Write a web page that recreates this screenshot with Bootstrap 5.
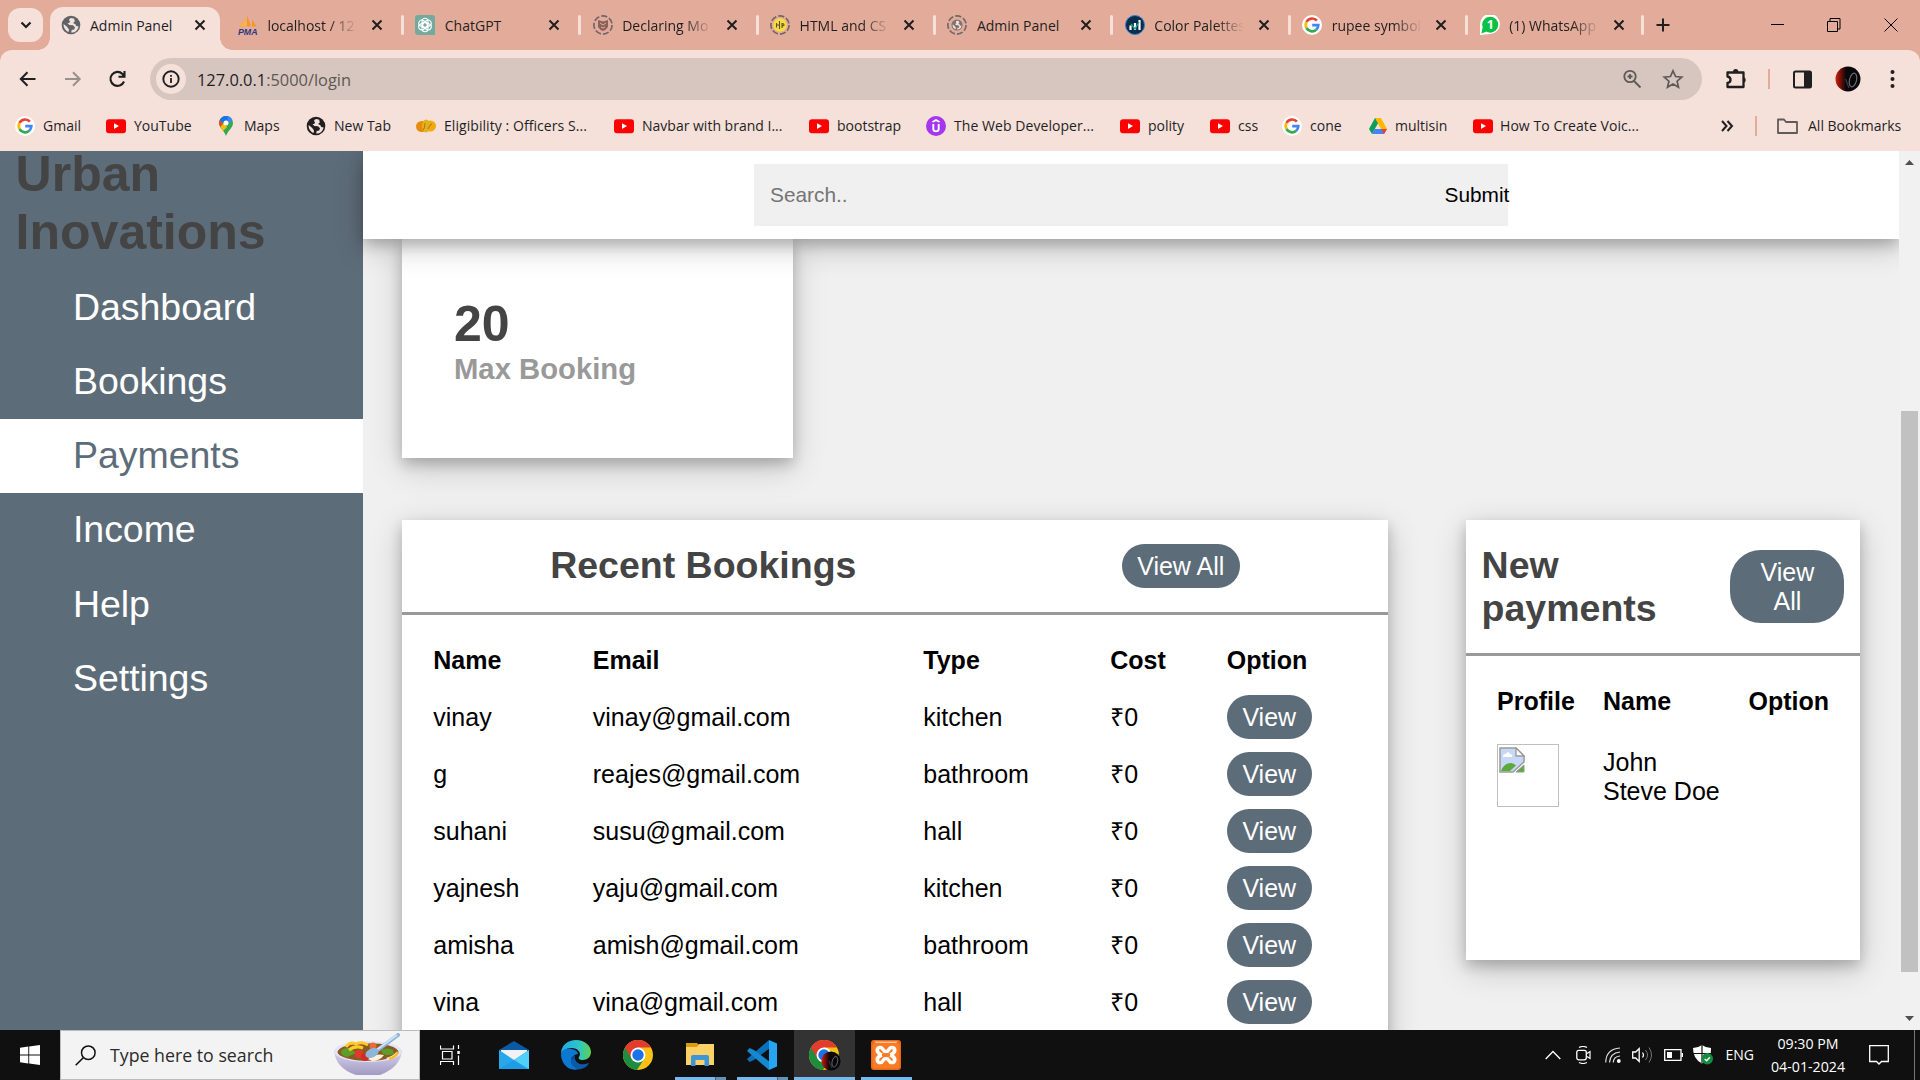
<!DOCTYPE html>
<html lang="en">
<head>
<meta charset="utf-8">
<title>Admin Panel</title>
<link href="https://cdn.jsdelivr.net/npm/bootstrap@5.3.0/dist/css/bootstrap.min.css" rel="stylesheet">
<style>
  :root { --strip:#e3ab9a; --bar:#f5e0da; --slate:#5d6c79; --page:#f0f0f0; }
  body { width:1920px; height:1080px; overflow:hidden; font-family:"Open Sans","Noto Sans",sans-serif; font-size:14px; line-height:20px; color:#1f1f1f; }
  svg { display:block; flex:none; }

  /* tab strip */
  .tabstrip { height:50px; background:var(--strip); padding-left:8px; }
  .tab-search { width:35px; height:34px; margin-top:8px; border-radius:12px; background:var(--bar); flex:none; }
  .tab-list { margin-left:7px; width:1594px; flex:none; }
  .tab-item { width:177.4px; height:50px; padding:0 0 0 10.5px; flex:none; position:relative; }
  .tab-item .tab-title { width:97px; margin-left:9.5px; padding-top:1px; white-space:nowrap; overflow:hidden; -webkit-mask-image:linear-gradient(90deg,#000 62px,transparent 90px); }
  .tab-item .tab-title.whole { -webkit-mask-image:none; }
  .tab-item .tab-x { margin-left:6.5px; }
  .tab-item.parted::after { content:""; position:absolute; right:1px; top:15px; width:3px; height:20px; border-radius:2px; background:var(--bar); }
  .tab-item.current::before { content:""; position:absolute; left:0; top:7px; width:170px; height:43px; border-radius:13px 13px 0 0; background:var(--bar); }
  .tab-item.current > * { position:relative; }
  .flare { position:absolute !important; top:38px; width:12px; height:12px; }
  .flare-l { left:-12px; background:radial-gradient(circle at 0 0,transparent 11.5px,var(--bar) 12px); }
  .flare-r { left:170px; background:radial-gradient(circle at 100% 0,transparent 11.5px,var(--bar) 12px); }

  /* toolbar */
  .toolshell { background:var(--strip); }
  .toolrow { height:58px; background:var(--bar); border-radius:12px 12px 0 0; padding:8px 0 8px 18px; }
  .omnibox { width:1552px; height:42px; margin-left:22px; border-radius:21px; background:#d7c6bf; padding:0 18px 0 6px; font-size:16.4px; flex:none; }
  .site-info { width:30px; height:30px; border-radius:50%; background:var(--bar); }
  .bookrow { height:43px; background:var(--bar); padding-left:15px; padding-bottom:7px; }
  .bookmark { gap:8px; white-space:nowrap; flex:none; }
  .vbar { width:2px; height:20px; background:var(--strip); }

  /* page */
  .viewport { height:879px; background:var(--page); overflow:hidden; font-family:"Liberation Sans",Arial,sans-serif; color:#000; font-size:25px; line-height:28.5px; }
  .sidepanel { width:363px; background:var(--slate); flex:none; }
  .brandname { font-size:50px; line-height:57.6px; font-weight:700; color:#444; margin:-5px 0 9px; padding-left:15.6px; }
  .sidelink { height:74.2px; padding:15.600px 0 0 73px; font-size:37.5px; line-height:43px; color:#fff; text-decoration:none; display:block; letter-spacing:-.05px; }
  .sidelink.here { background:#fff; color:var(--slate); }
  .mainpane { width:1536px; flex:none; min-height:0; }
  .raised { background:#fff; box-shadow:0 6.25px 12.5px 0 rgba(0,0,0,.2),0 9.4px 31.25px 0 rgba(0,0,0,.19); }
  .topbar { height:88px; position:relative; z-index:2; flex:none; clip-path:inset(0 0 -60px -60px); }
  .finder { width:754px; height:62px; margin:13px 0 0 391px; background:#f0f0f0; padding-left:16px; font-size:20.83px; }
  .finder-input { width:674.5px; color:#757575; flex:none; }
  .content-area { padding:0 39px; }
  .stat { width:391px; height:219px; padding:57px 0 0 52px; }
  .stat-num { font-size:50px; line-height:57.6px; font-weight:700; color:#444; }
  .stat-label { font-size:29.25px; line-height:33px; font-weight:700; color:#999; margin-top:-1px; }
  .boxes { margin-top:62px; gap:78px; }
  .recent { width:986px; height:600px; flex:none; }
  .newpay { width:394px; height:440px; flex:none; }
  .box-head { padding:0 15.6px; border-bottom:3px solid #999; color:#444; }
  .box-head h2 { font-size:37.5px; line-height:43px; font-weight:700; margin:0; }
  .recent .box-head { height:95px; }
  .recent .box-head h2 { margin-top:-2px; }
  .newpay .box-head { height:136px; }
  .pill { display:inline-block; background:var(--slate); color:#fff; padding:7.8px 15.6px; border-radius:31px; text-align:center; text-decoration:none; line-height:28.4px; vertical-align:middle; }
  .newpay .pill { width:114px; }
  .grid-table { table-layout:fixed; border-collapse:collapse; }
  .grid-table th, .grid-table td { padding:0; height:57px; vertical-align:middle; text-align:left; white-space:nowrap; }
  .recent .grid-table { width:920px; margin:16.5px 0 0 31.3px; }
  .newpay .grid-table { width:360px; margin:17px 0 0 31px; }
  .newpay .grid-table td { height:90px; }
  .newpay .person { padding-top:4px; line-height:29px; }
  .missing { width:62px; height:63px; border:1px solid #c0c0c0; padding:2px 1px; }
  .scroller { width:21px; background:#f1f1f1; padding:9px 0 9px; flex:none; }
  .thumb { width:17px; height:561px; margin-top:246px; background:#c1c1c1; }

  /* taskbar */
  .taskbar { height:50px; background:#101010; color:#fff; }
  .start { width:60px; }
  .tasksearch { width:360px; height:50px; background:#f3f3f3; border:1px solid #bbb; color:#2b2b2b; font-size:17.75px; padding-left:14px; flex:none; }
  .tasksearch-label { width:237px; padding-left:14px; flex:none; }
  .app { width:62px; height:50px; position:relative; flex:none; }
  .app.open::after { content:""; position:absolute; left:6px; right:5px; bottom:0; height:3px; background:#76b9ed; }
  .app.multi::after { background:linear-gradient(90deg,#76b9ed 40px,#4b5f70 40px,#4b5f70 41px,#6593b8 41px); }
  .app.active { background:linear-gradient(90deg,transparent 1px,#333 1px); }
  .app.active::after { left:1px; right:0; }
  .tray { margin-left:auto; padding-right:5px; }
  .clock { width:90px; margin-left:9px; line-height:23px; font-size:14.2px; text-align:center; }
  .peek { width:1px; height:50px; background:#777; margin-left:25px; }
</style>
<script src="https://cdn.jsdelivr.net/npm/bootstrap@5.3.0/dist/js/bootstrap.bundle.min.js"></script>
</head>
<body class="d-flex flex-column">

<svg width="0" height="0" class="position-absolute" aria-hidden="true">
  <symbol id="i-x" viewBox="0 0 12 12"><path d="M1.500 1.500l9 9M10.500 1.500l-9 9" stroke="#1f1f1f" stroke-width="2" fill="none"/></symbol>
  <symbol id="i-globe" viewBox="0 0 20 20"><circle cx="10" cy="10" r="9.300" fill="currentColor"/><path d="M10.500 3C8 3.500 7.500 5 8.800 6.200c1 1-.8 1.800-2.300 2L8.500 10l3.500.3 2 2-.8 2.200-2.500.5-.5 2.500c3.500.2 6.800-2 7.300-6.300-1.500.5-2.800-.4-3-2L12 8l1.800-1.500-.6-2.800zM2.600 9c-.3 3.500 1.800 6.800 5 8l.4-2.500-2-2.700z" fill="#f5e0da"/></symbol>
  <symbol id="i-g" viewBox="0 0 20 20"><circle cx="10" cy="10" r="10" fill="#fff"/><g fill="none" stroke-width="2.700"><path d="M14.900 5.700A6.300 6.300 0 0 0 4.500 7" stroke="#ea4335"/><path d="M4.500 7a6.300 6.300 0 0 0 0 6" stroke="#fbbc05"/><path d="M4.500 13a6.300 6.300 0 0 0 9.700 1.700" stroke="#34a853"/><path d="M14.200 14.700A6.300 6.300 0 0 0 16.300 10.200H10.200" stroke="#4285f4"/></g></symbol>
  <symbol id="i-yt" viewBox="0 0 20 20"><rect y="3.200" width="20" height="14" rx="3" fill="#f00"/><path d="M8 7.300v5.600l5-2.800z" fill="#fff"/></symbol>
  <symbol id="i-chrome" viewBox="0 0 30 30"><circle cx="15" cy="15" r="15" fill="#fbc116"/><path d="M15 15L2 7.500A15 15 0 0 0 14 30l7.500-11.500z" fill="#1e8e3e"/><path d="M2 7.500A15 15 0 0 1 28 7.500H15L8.500 18.700z" fill="#e33b2e"/><circle cx="15" cy="15" r="7.500" fill="#fff"/><circle cx="15" cy="15" r="5.700" fill="#1a73e8"/></symbol>
  <symbol id="i-avatar" viewBox="0 0 26 26"><defs><linearGradient id="glow"><stop stop-color="#d5200c"/><stop offset=".22" stop-color="#6a0f08"/><stop offset=".42" stop-color="#0a0709"/></linearGradient></defs><circle cx="13" cy="13" r="12.500" fill="url(#glow)"/><ellipse cx="18" cy="14" rx="3.500" ry="7" transform="rotate(14 18 14)" fill="none" stroke="#6d717e" stroke-width="1.100"/><path d="M10.500 13l3.500 9" stroke="#454854"/></symbol>
  <symbol id="i-dash" viewBox="0 0 20 20"><circle cx="10" cy="10" r="9.100" fill="none" stroke="#6f686a" stroke-width="1.700" stroke-dasharray="6.100 2.070"/></symbol>
</svg>

<!-- Tabs -->
<div class="tabstrip d-flex">
  <div class="tab-search d-flex align-items-center justify-content-center"><svg width="12" height="8" viewBox="0 0 12 8"><path d="M1.500 1.500L6 6l4.500-4.500" fill="none" stroke="#1f1f1f" stroke-width="2.200"/></svg></div>
  <div class="tab-list d-flex">
    <div class="tab-item current d-flex align-items-center"><i class="flare flare-l"></i><i class="flare flare-r"></i>
      <svg width="20" height="20" style="color:#5f6368"><use href="#i-globe"/></svg><span class="tab-title whole">Admin Panel</span><svg class="tab-x" width="12" height="12"><use href="#i-x"/></svg></div>
    <div class="tab-item parted d-flex align-items-center">
      <svg width="20" height="20" viewBox="0 0 20 20"><path d="M1.500 11.500L8 3v8.500zM9 11.500V0l4 11.500zM14 11.500V4.500l4.500 7z" fill="#f7981d"/><path d="M1.500 11.500L8 3v8.500z" fill="#fbb04c"/><text x="0" y="19.500" font-family="Liberation Sans" font-weight="700" font-style="italic" font-size="8.800" fill="#29397e">PMA</text></svg><span class="tab-title">localhost / 127</span><svg class="tab-x" width="12" height="12"><use href="#i-x"/></svg></div>
    <div class="tab-item parted d-flex align-items-center">
      <svg width="20" height="20" viewBox="0 0 20 20"><path d="M3 0h14q3 0 3 3v17H3q-3 0-3-3V3q0-3 3-3z" fill="#74aa9c"/><g fill="none" stroke="#fff" stroke-width="1.100"><rect id="k" x="7" y="3.300" width="6" height="9" rx="3"/><use href="#k" transform="rotate(60 10 10)"/><use href="#k" transform="rotate(120 10 10)"/><use href="#k" transform="rotate(180 10 10)"/><use href="#k" transform="rotate(240 10 10)"/><use href="#k" transform="rotate(300 10 10)"/></g></svg><span class="tab-title whole">ChatGPT</span><svg class="tab-x" width="12" height="12"><use href="#i-x"/></svg></div>
    <div class="tab-item parted d-flex align-items-center">
      <svg width="20" height="20" viewBox="0 0 20 20"><use href="#i-dash"/><path d="M5 5l5 1.500L15 5v7q-2 3-5 4-3-1-5-4z" fill="#8b625a"/><path d="M7 8l3 2 3-2M8 12l2 1 2-1" stroke="#dfaa99" fill="none"/></svg><span class="tab-title">Declaring Mo</span><svg class="tab-x" width="12" height="12"><use href="#i-x"/></svg></div>
    <div class="tab-item parted d-flex align-items-center">
      <svg width="20" height="20" viewBox="0 0 20 20"><use href="#i-dash"/><circle cx="10" cy="10" r="6.700" fill="#f8dc3d"/><path d="M6.500 8v4.500M6.500 10h3M9.500 6v8M12 8v5M12 8.500q2.500 0 1.800 2l-1.800.5" fill="none" stroke="#575034" stroke-width="1.100"/></svg><span class="tab-title">HTML and CS</span><svg class="tab-x" width="12" height="12"><use href="#i-x"/></svg></div>
    <div class="tab-item parted d-flex align-items-center">
      <svg width="20" height="20" viewBox="0 0 20 20" style="color:#7f7472"><use href="#i-dash"/><use href="#i-globe" x="4" y="4" width="12" height="12"/></svg><span class="tab-title whole">Admin Panel</span><svg class="tab-x" width="12" height="12"><use href="#i-x"/></svg></div>
    <div class="tab-item parted d-flex align-items-center">
      <svg width="20" height="20" viewBox="0 0 20 20"><circle cx="10" cy="10" r="9.500" fill="#0b2c4a" stroke="#2b84cb"/><path d="M5.500 10.500V15M10 8v7M14.500 5v10" stroke="#fff" stroke-width="2.200"/><path d="M6 9l4 5 4-7" fill="none" stroke="#17a88f" stroke-width="1.300"/></svg><span class="tab-title">Color Palettes</span><svg class="tab-x" width="12" height="12"><use href="#i-x"/></svg></div>
    <div class="tab-item parted d-flex align-items-center">
      <svg width="20" height="20"><use href="#i-g"/></svg><span class="tab-title">rupee symbol</span><svg class="tab-x" width="12" height="12"><use href="#i-x"/></svg></div>
    <div class="tab-item parted d-flex align-items-center" style="width:176px">
      <svg width="20" height="20" viewBox="0 0 20 20"><path d="M0 20V9A10 10 0 1 1 10 19z" fill="#fff"/><circle cx="10.200" cy="9.700" r="8" fill="#09c144"/><path d="M1.500 18.500l1-6 4 4z" fill="#09c144"/><text x="6.700" y="14.300" font-size="12.500" font-weight="700" fill="#fff">1</text></svg><span class="tab-title">(1) WhatsApp</span><svg class="tab-x" width="12" height="12"><use href="#i-x"/></svg></div>
  </div>
  <div class="d-flex align-items-center" style="margin-left:12px">
    <svg width="14" height="14" viewBox="0 0 14 14"><path d="M7 .5v13M.5 7h13" stroke="#1f1f1f" stroke-width="2"/></svg>
    <svg style="margin-left:101px" width="13" height="14" viewBox="0 0 13 14"><path d="M0 6.500h13" stroke="#000"/></svg>
    <svg style="margin-left:43px" width="14" height="14" viewBox="0 0 14 14"><path d="M.5 3.500h10v10H.5zM3 3.500v-3h10v10.500h-2.500" fill="none" stroke="#000"/></svg>
    <svg style="margin-left:43px" width="14" height="14" viewBox="0 0 14 14"><path d="M.5.5l13 13M13.500.5l-13 13" fill="none" stroke="#000"/></svg>
  </div>
</div>

<!-- Toolbar -->
<div class="toolshell">
  <div class="toolrow d-flex align-items-center">
    <svg width="20" height="20" viewBox="0 0 20 20"><path d="M17.500 10H3M9.500 3.300L2.800 10l6.700 6.700" fill="none" stroke="#1f1f1f" stroke-width="2"/></svg>
    <svg style="margin-left:25px" width="20" height="20" viewBox="0 0 20 20"><path d="M2 10h14.500M10 3.300l6.700 6.700-6.700 6.700" fill="none" stroke="#998f8d" stroke-width="2"/></svg>
    <svg style="margin-left:25px" width="20" height="20" viewBox="0 0 20 20"><path d="M16 12.500A7 7 0 1 1 14.500 5l1.500 2M16.500 2v5.700h-6" fill="none" stroke="#1f1f1f" stroke-width="2.100"/></svg>
    <div class="omnibox d-flex align-items-center">
      <div class="site-info d-flex align-items-center justify-content-center"><svg width="18" height="18" viewBox="0 0 18 18"><circle cx="9" cy="9" r="7.700" fill="none" stroke="#1f1f1f" stroke-width="1.900"/><path d="M9 8v5M9 5v1.800" stroke="#1f1f1f" stroke-width="1.800"/></svg></div>
      <span style="margin-left:11px;padding-top:1px">127.0.0.1<span style="color:#5f5753">:5000/login</span></span>
      <svg class="ms-auto" width="20" height="20" viewBox="0 0 20 20"><g fill="none" stroke="#5c5957" stroke-width="1.800"><circle cx="8" cy="7.500" r="5.700"/><path d="M12 12l6.500 6.500M8 5v5M5.500 7.500h5"/></g></svg>
      <svg style="margin-left:20px" width="22" height="20" viewBox="0 0 22 20"><path d="M11 1.800l2.600 5.700 6.200.6-4.700 4.100 1.400 6-5.500-3.200-5.500 3.200 1.400-6L2.200 8.100l6.200-.6z" fill="none" stroke="#5c5957" stroke-width="1.700"/></svg>
    </div>
    <svg style="margin-left:23px" width="23" height="24" viewBox="0 0 23 24"><path d="M2.500 5.500h16V20H2.500v-4q3-.5 3-3.200T2.500 9.500z" fill="none" stroke="#1f1f1f" stroke-width="2.300" stroke-linejoin="round"/><path d="M8 5a2.700 3 0 0 1 5.400 0zM18.500 10a3 3 0 0 1 0 5.800z" fill="#1f1f1f"/></svg>
    <div class="vbar" style="margin-left:20px"></div>
    <svg style="margin-left:23px" width="19" height="19" viewBox="0 0 19 19"><rect x="1" y="1.500" width="17" height="16" rx="1.500" fill="none" stroke="#1f1f1f" stroke-width="2"/><path d="M11 1.500h7v16h-7z" fill="#1f1f1f"/></svg>
    <svg style="margin-left:23px" width="26" height="26"><use href="#i-avatar"/></svg>
    <svg style="margin-left:29px" width="5" height="20" viewBox="0 0 5 20"><g fill="#1f1f1f"><circle cx="2.500" cy="3" r="2"/><circle cx="2.500" cy="10" r="2"/><circle cx="2.500" cy="17" r="2"/></g></svg>
  </div>
</div>
<div class="bookrow d-flex align-items-center">
  <div class="bookmark d-flex" style="width:91px"><svg width="20" height="20"><use href="#i-g"/></svg>Gmail</div>
  <div class="bookmark d-flex" style="width:110px"><svg width="20" height="20"><use href="#i-yt"/></svg>YouTube</div>
  <div class="bookmark d-flex" style="width:90px"><svg width="20" height="20" viewBox="0 0 20 20"><path d="M10 0a7 7 0 0 0-7 7c0 5 5 7 7 13 2-6 7-8 7-13a7 7 0 0 0-7-7z" fill="#34a853"/><path d="M3.700 4L10 9l5-6.900A7 7 0 0 0 3.700 4z" fill="#1a73e8"/><path d="M3.700 4L7 7.500 4.500 11Q2 7 3.700 4z" fill="#ea4335"/><path d="M4.500 11L7.600 7l3.500 4L7 15z" fill="#fbbc04"/><path d="M12 .3q3.500 1 4.500 4L11 8z" fill="#4285f4"/><circle cx="10" cy="7" r="2.500" fill="#fff"/></svg>Maps</div>
  <div class="bookmark d-flex" style="width:110px;color:#1f1f1f"><svg width="20" height="20"><use href="#i-globe"/></svg>New Tab</div>
  <div class="bookmark d-flex" style="width:198px;letter-spacing:.06px"><svg width="20" height="20" viewBox="0 0 20 20"><ellipse cx="6" cy="10.500" rx="6" ry="5.500" fill="#e88a0a"/><ellipse cx="14" cy="10" rx="6" ry="5.500" fill="#f2a90c"/><ellipse cx="10" cy="10" rx="4" ry="6.500" fill="#e0b31e"/><path d="M7 14q2-1 2-7M12 13q2-5 4-5" stroke="#b8700a" fill="none"/></svg>Eligibility : Officers S...</div>
  <div class="bookmark d-flex" style="width:195px"><svg width="20" height="20"><use href="#i-yt"/></svg>Navbar with brand I...</div>
  <div class="bookmark d-flex" style="width:117px"><svg width="20" height="20"><use href="#i-yt"/></svg>bootstrap</div>
  <div class="bookmark d-flex" style="width:194px;letter-spacing:.06px"><svg width="20" height="20" viewBox="0 0 20 20"><circle cx="10" cy="10" r="10" fill="#a435f0"/><path d="M6.500 6L10 4l3.500 2M7.300 8v5q0 2.300 2.700 2.300t2.700-2.300V8" fill="none" stroke="#fff" stroke-width="1.900"/></svg>The Web Developer...</div>
  <div class="bookmark d-flex" style="width:90px"><svg width="20" height="20"><use href="#i-yt"/></svg>polity</div>
  <div class="bookmark d-flex" style="width:72px"><svg width="20" height="20"><use href="#i-yt"/></svg>css</div>
  <div class="bookmark d-flex" style="width:86px"><svg width="20" height="20"><use href="#i-g"/></svg>cone</div>
  <div class="bookmark d-flex" style="width:105px;gap:7px"><svg width="20" height="20" viewBox="0 0 20 20"><path d="M7 2h6L4 18l-3-5z" fill="#0f9d58"/><path d="M7 2h6l6 11h-6z" fill="#ffba00"/><path d="M6.500 13H19l-3 5H4z" fill="#4285f4"/><path d="M13 13h6l-3 5z" fill="#ea4335"/></svg>multisin</div>
  <div class="bookmark d-flex" style="gap:7px;letter-spacing:.06px"><svg width="20" height="20"><use href="#i-yt"/></svg>How To Create Voic...</div>
  <svg class="ms-auto" width="14" height="14" viewBox="0 0 14 14"><path d="M2 2l4.500 5L2 12M7.500 2L12 7l-4.500 5" fill="none" stroke="#1f1f1f" stroke-width="2"/></svg>
  <div class="vbar" style="margin-left:21px"></div>
  <div class="bookmark d-flex" style="margin-left:20px;width:143px;gap:10px"><svg width="21" height="20" viewBox="0 0 21 20"><path d="M1 3.500h6l2 2.500h11v11H1z" fill="none" stroke="#5f5b5a" stroke-width="1.800" stroke-linejoin="round"/></svg>All Bookmarks</div>
</div>

<!-- Web page -->
<div class="viewport d-flex">
  <nav class="sidepanel">
    <h1 class="brandname">Urban<br>Inovations</h1>
    <a class="sidelink">Dashboard</a>
    <a class="sidelink">Bookings</a>
    <a class="sidelink here">Payments</a>
    <a class="sidelink">Income</a>
    <a class="sidelink">Help</a>
    <a class="sidelink">Settings</a>
  </nav>
  <main class="mainpane d-flex flex-column">
    <div class="topbar raised d-flex align-items-start">
      <div class="finder d-flex align-items-center"><span class="finder-input">Search..</span><span>Submit</span></div>
    </div>
    <div class="content-area">
      <div class="stat raised">
        <div class="stat-num">20</div>
        <div class="stat-label">Max Booking</div>
      </div>
      <div class="boxes d-flex align-items-start">
        <section class="recent raised">
          <div class="box-head d-flex align-items-center justify-content-around"><h2>Recent Bookings</h2><a class="pill">View All</a></div>
          <table class="grid-table">
            <colgroup><col style="width:159.500px"><col style="width:330.500px"><col style="width:187px"><col style="width:116.500px"><col></colgroup>
            <tr><th>Name</th><th>Email</th><th>Type</th><th>Cost</th><th>Option</th></tr>
            <tr><td>vinay</td><td>vinay@gmail.com</td><td>kitchen</td><td>₹0</td><td><a class="pill">View</a></td></tr>
            <tr><td>g</td><td>reajes@gmail.com</td><td>bathroom</td><td>₹0</td><td><a class="pill">View</a></td></tr>
            <tr><td>suhani</td><td>susu@gmail.com</td><td>hall</td><td>₹0</td><td><a class="pill">View</a></td></tr>
            <tr><td>yajnesh</td><td>yaju@gmail.com</td><td>kitchen</td><td>₹0</td><td><a class="pill">View</a></td></tr>
            <tr><td>amisha</td><td>amish@gmail.com</td><td>bathroom</td><td>₹0</td><td><a class="pill">View</a></td></tr>
            <tr><td>vina</td><td>vina@gmail.com</td><td>hall</td><td>₹0</td><td><a class="pill">View</a></td></tr>
          </table>
        </section>
        <section class="newpay raised">
          <div class="box-head d-flex align-items-center justify-content-between"><h2>New<br>payments</h2><a class="pill">View All</a></div>
          <table class="grid-table">
            <colgroup><col style="width:106px"><col style="width:145.500px"><col></colgroup>
            <tr><th>Profile</th><th>Name</th><th>Option</th></tr>
            <tr><td><div class="missing"><svg width="26" height="26" viewBox="0 0 26 26"><path d="M1 1h16l8 8v6L14 25H1z" fill="#c6d8f5" stroke="#9a9a9a" stroke-width="1.500"/><path d="M2 24q3-8 10-8 3 0 5 2.500L11 24z" fill="#5bab38"/><path d="M4 9q1-3 3-2 2-4 4 0 3 0 2 3H4z" fill="#fff"/><path d="M17 1v8h8z" fill="#fff" stroke="#9a9a9a" stroke-width="1.300"/><path d="M17 25l8-7v7z" fill="#5bab38" stroke="#9a9a9a"/></svg></div></td><td><div class="person">John<br>Steve Doe</div></td><td></td></tr>
          </table>
        </section>
      </div>
    </div>
  </main>
  <div class="scroller d-flex flex-column align-items-center">
    <svg width="9" height="5" viewBox="0 0 9 5"><path d="M0 5L4.500 0 9 5z" fill="#505050"/></svg>
    <div class="thumb"></div>
    <svg class="mt-auto" width="9" height="5" viewBox="0 0 9 5"><path d="M0 0l4.500 5L9 0z" fill="#505050"/></svg>
  </div>
</div>

<!-- Taskbar -->
<div class="taskbar d-flex align-items-center">
  <div class="start d-flex justify-content-center"><svg width="20" height="20" viewBox="0 0 20 20"><path d="M0 2.800l8.300-1.200v8H0zM9.200 1.400L20 0v9.600H9.200zM0 10.500h8.300v8L0 17.300zM9.200 10.500H20V20L9.200 18.600z" fill="#fff"/></svg></div>
  <div class="tasksearch d-flex align-items-center">
    <svg width="21" height="21" viewBox="0 0 21 21"><circle cx="13.300" cy="7.700" r="6.800" fill="none" stroke="#111" stroke-width="1.500"/><path d="M8.500 12.500L.7 20.300" stroke="#111" stroke-width="1.600"/></svg>
    <span class="tasksearch-label">Type here to search</span>
    <svg width="70" height="44" viewBox="0 0 70 44"><defs><linearGradient id="bowl" x2="0" y2="1"><stop stop-color="#d9d5ee"/><stop offset="1" stop-color="#a29ac4"/></linearGradient></defs><path d="M1 17q1 18 22 25h24q21-8 22-25z" fill="url(#bowl)"/><ellipse cx="35" cy="18.500" rx="34" ry="10.500" fill="#e6e3f5"/><ellipse cx="35" cy="19" rx="30.500" ry="8.800" fill="#8a5a25"/><path d="M8 18q4-5 10-2l5 4-9 4q-7-2-6-6zM48 17q6-3 12 0l1 4q-6 2-11 0z" fill="#5c9e27"/><path d="M13 14q4-6 10-3 6-3 12 1M16 17q6-5 14-2" fill="none" stroke="#ffc928" stroke-width="3"/><circle cx="26" cy="21" r="4" fill="#e3392c"/><circle cx="32" cy="24" r="4" fill="#d22b22"/><circle cx="40" cy="13" r="3.500" fill="#e96b3a"/><path d="M35 26q8-6 16-4-4 6-12 6zM53 25q8-2 11-7-1 7-8 9z" fill="#fff0d6"/><path d="M56 26q7-2 9-7" stroke="#f5bd2a" stroke-width="2.500" fill="none"/><path d="M42 19L65 2" stroke="#8eb4dc" stroke-width="4" stroke-linecap="round"/><path d="M42 18L64 2" stroke="#cfe2f7" stroke-width="2"/><ellipse cx="39" cy="20" rx="7" ry="4.500" fill="#8eb5da" transform="rotate(-25 39 20)"/></svg>
  </div>
  <div class="app d-flex align-items-center justify-content-center" style="width:60px"><svg width="20" height="20" viewBox="0 0 20 20"><path d="M.5.500v3.500h13V.5M2.500 6.500h9.500v7.500H2.500zM.5 20v-3.500h13V20M18.500 0v4M18.500 10.500V20" fill="none" stroke="#fff" stroke-width="1.200"/><path d="M17.300 6h2.500v3h-2.500z" fill="#fff"/></svg></div>
  <div class="app d-flex align-items-center justify-content-center" style="margin-left:3px"><svg width="30" height="28" viewBox="0 0 30 28"><path d="M0 9L15 0l15 9v19H0z" fill="#0c59a4"/><path d="M2 9h26v10H2z" fill="#f2f2f2"/><path d="M0 9l15 10L30 9v19H0z" fill="#28a8ea"/><path d="M15 19l15-10v19z" fill="#50d0fb"/><path d="M15 19l12 9H0l15-9z" fill="#1a8fe3" opacity=".55"/></svg></div>
  <div class="app d-flex align-items-center justify-content-center"><svg width="30" height="30" viewBox="0 0 30 30"><defs><linearGradient id="ed"><stop stop-color="#20a9e8"/><stop offset=".6" stop-color="#2dc6c8"/><stop offset="1" stop-color="#62d04d"/></linearGradient></defs><path d="M0 14C0 5 7 0 15 0c9 0 15 6 15 12 0 5-4 8-8 8-4 0-5-2-4-3 3-5-2-9-7-9-6 0-10 3-11 6z" fill="url(#ed)"/><path d="M0 14c1-4 5-6 10-5 4 0 7 3 7 5-8 1-8 10 1 15C8 32 0 24 0 14z" fill="#0b78d1"/><path d="M10 19c0 8 8 13 18 4-5 3-15 2-14-7-3 0-4 1-4 3z" fill="#114a8c"/><path d="M10 19q-1 8 8 10.500Q26 28 28 23 18 27 14 20z" fill="#0d5aa9"/></svg></div>
  <div class="app d-flex align-items-center justify-content-center"><svg width="30" height="30"><use href="#i-chrome"/></svg></div>
  <div class="app open multi d-flex align-items-center justify-content-center"><svg width="28" height="24" viewBox="0 0 28 24"><path d="M0 0h11l3 3v3H0z" fill="#dd9b0c"/><path d="M0 4h11l2-3h15v21H0z" fill="#fdd168"/><path d="M5 23v-9q0-2 2-2h14q2 0 2 2v9h-4.500v-6h-9v6z" fill="#3e95d8"/></svg></div>
  <div class="app open multi d-flex align-items-center justify-content-center"><svg width="30" height="30" viewBox="0 0 30 30"><path d="M22 0L0 19l2.500 3L7 20 23 8z" fill="#0b70b9"/><path d="M0 11l2.500-3L7 10l16 12-1 8z" fill="#1688d0"/><path d="M22 0l8 3.500v23L22 30z" fill="#26a5f2"/></svg></div>
  <div class="app open active d-flex align-items-center justify-content-center"><svg style="margin-left:2px" width="32" height="32" viewBox="0 0 32 32"><use href="#i-chrome" x="0" y="1" width="30" height="30"/><use href="#i-avatar" x="12" y="12" width="20" height="20"/></svg></div>
  <div class="app open d-flex align-items-center justify-content-center"><svg width="30" height="30" viewBox="0 0 30 30"><rect width="30" height="30" rx="3" fill="#e66a17"/><rect x="1.500" y="3" width="27" height="25.500" rx="2" fill="#fb7a24"/><path d="M3 1.500h24L25 3H5z" fill="#ffc49b"/><path d="M10.500 15C4 12 6 7 9.500 7.500c3 0 2 4 5.500 4s2.500-4 5.500-4C24 7 26 12 19.500 15c6.500 3 4.500 8 1 7.500-3 0-2-4-5.500-4s-2.500 4-5.500 4C6 23 4 18 10.500 15z" fill="none" stroke="#fff" stroke-width="3.600"/><path d="M11 15h8" stroke="#fb7a24" stroke-width="3"/></svg></div>

  <div class="tray d-flex align-items-center">
    <svg width="16" height="10" viewBox="0 0 16 10"><path d="M.7 9L8 1.500 15.300 9" fill="none" stroke="#fff" stroke-width="1.300"/></svg>
    <svg style="margin-left:15px" width="15" height="18" viewBox="0 0 15 18"><path d="M3 1.500q4-2 8 0M3 16.500q4 2 8 0M11 7.500l3-2v7l-3-2" fill="none" stroke="#fff" stroke-width="1.200"/><rect x=".8" y="4.300" width="9.500" height="9.500" rx="2" fill="none" stroke="#fff" stroke-width="1.300"/></svg>
    <svg style="margin-left:14px" width="16" height="16" viewBox="0 0 16 16"><g fill="none" stroke="#ddd" stroke-width="1.200"><path d="M.7 15.500Q1 2 15 1M4.500 15.500Q5 6 15 5M8.300 15.500Q8.500 9.500 15 9"/></g><circle cx="13.800" cy="14" r="1.900" fill="#fff"/></svg>
    <svg style="margin-left:11px" width="21" height="18" viewBox="0 0 21 18"><path d="M.7 6v6h3l3.500 3.500v-13L3.700 6z" fill="none" stroke="#fff" stroke-width="1.300"/><path d="M10.500 6.500q2 2.500 0 5" stroke="#fff" fill="none" stroke-width="1.200"/><path d="M13.500 4q4 5 0 10M17 1.500q5 7.500 0 15" stroke="#777" fill="none"/></svg>
    <svg style="margin-left:11px" width="19" height="12" viewBox="0 0 19 12"><path d="M.7.700h16.300v10.600H.700z" fill="none" stroke="#fff" stroke-width="1.300"/><path d="M3 3h5v6H3zM17.500 4H19v4h-1.500z" fill="#fff"/></svg>
    <svg style="margin-left:10px" width="20" height="20" viewBox="0 0 20 20"><path d="M9 0q4 3 9 3 1 11-9 15.500Q0 14 0 3q5 0 9-3z" fill="#fff"/><path d="M9 0v18M0 8.500h18" stroke="#101010" stroke-width="1.200"/><circle cx="14.300" cy="13.800" r="5.700" fill="#148b41"/><path d="M11.700 14l1.900 1.800 3.300-3.500" fill="none" stroke="#fff" stroke-width="1.300"/></svg>
    <span style="margin-left:13px">ENG</span>
    <div class="clock">09:30 PM<br>04-01-2024</div>
    <svg style="margin-left:16px" width="20" height="20" viewBox="0 0 20 20"><path d="M.7.700h18.600v15.800h-6.800L10 19l-2.500-2.500H.7z" fill="none" stroke="#fff" stroke-width="1.300"/></svg>
    <div class="peek"></div>
  </div>
</div>
</body>
</html>
